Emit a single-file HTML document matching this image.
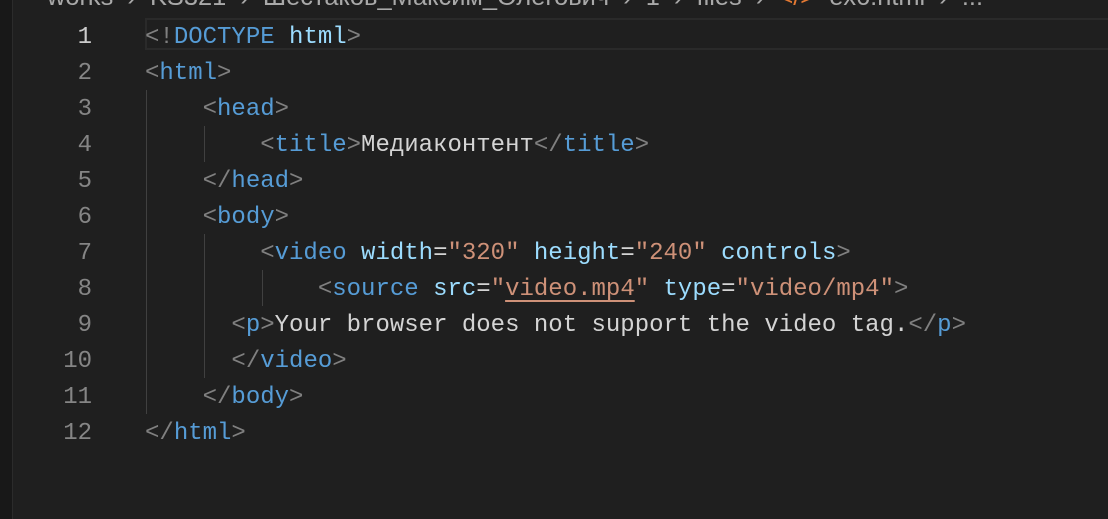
<!DOCTYPE html>
<html><head><style>
body{margin:0;width:1108px;height:519px;background:#1f1f1f;overflow:hidden;position:relative;font-family:"Liberation Mono",monospace;font-size:24px}
.strip{position:absolute;left:0;top:0;width:12px;height:519px;background:#181818;border-right:1px solid #2b2b2b}
.bc{position:absolute;left:47px;top:-17px;color:#a9a9a9;font-family:"Liberation Sans","DejaVu Sans",sans-serif;font-size:25.4px;white-space:pre}
.hl{position:absolute;left:145px;top:18px;width:980px;height:32px;border:2px solid #2a2a2a;box-sizing:border-box}
.ln{position:absolute;left:20px;width:72px;text-align:right;color:#858585;height:36px;line-height:36px}
.code{position:absolute;left:145px;height:36px;line-height:36px;white-space:pre;color:#d4d4d4}
.g{position:absolute;width:1px;background:#404040}
.p{color:#808080}.t{color:#569cd6}.a{color:#9cdcfe}.s{color:#ce9178}
u{text-decoration-color:#ce9178;text-underline-offset:5px}
</style></head><body>
<div class="strip"></div>
<div class="bc">works  ›  KS321  ›  Шестаков_Максим_Олегович  ›  1  ›  files  ›  <span style="color:#e37933">&lt;/&gt;</span>  ex6.html  ›  ...</div>
<div class="hl"></div>
<div class="g" style="left:146px;top:90px;height:324px"></div>
<div class="g" style="left:204px;top:126px;height:36px"></div>
<div class="g" style="left:204px;top:234px;height:144px"></div>
<div class="g" style="left:262px;top:270px;height:36px"></div>
<div style="position:absolute;left:0;top:2px;width:1108px">
<div class="ln" style="top:18px;color:#cccccc">1</div>
<div class="ln" style="top:54px">2</div>
<div class="ln" style="top:90px">3</div>
<div class="ln" style="top:126px">4</div>
<div class="ln" style="top:162px">5</div>
<div class="ln" style="top:198px">6</div>
<div class="ln" style="top:234px">7</div>
<div class="ln" style="top:270px">8</div>
<div class="ln" style="top:306px">9</div>
<div class="ln" style="top:342px">10</div>
<div class="ln" style="top:378px">11</div>
<div class="ln" style="top:414px">12</div>
<div class="code" style="top:18px"><span class="p">&lt;!</span><span class="t">DOCTYPE</span> <span class="a">html</span><span class="p">&gt;</span></div>
<div class="code" style="top:54px"><span class="p">&lt;</span><span class="t">html</span><span class="p">&gt;</span></div>
<div class="code" style="top:90px">    <span class="p">&lt;</span><span class="t">head</span><span class="p">&gt;</span></div>
<div class="code" style="top:126px">        <span class="p">&lt;</span><span class="t">title</span><span class="p">&gt;</span>Медиаконтент<span class="p">&lt;/</span><span class="t">title</span><span class="p">&gt;</span></div>
<div class="code" style="top:162px">    <span class="p">&lt;/</span><span class="t">head</span><span class="p">&gt;</span></div>
<div class="code" style="top:198px">    <span class="p">&lt;</span><span class="t">body</span><span class="p">&gt;</span></div>
<div class="code" style="top:234px">        <span class="p">&lt;</span><span class="t">video</span> <span class="a">width</span>=<span class="s">"320"</span> <span class="a">height</span>=<span class="s">"240"</span> <span class="a">controls</span><span class="p">&gt;</span></div>
<div class="code" style="top:270px">            <span class="p">&lt;</span><span class="t">source</span> <span class="a">src</span>=<span class="s">"<u>video.mp4</u>"</span> <span class="a">type</span>=<span class="s">"video/mp4"</span><span class="p">&gt;</span></div>
<div class="code" style="top:306px">      <span class="p">&lt;</span><span class="t">p</span><span class="p">&gt;</span>Your browser does not support the video tag.<span class="p">&lt;/</span><span class="t">p</span><span class="p">&gt;</span></div>
<div class="code" style="top:342px">      <span class="p">&lt;/</span><span class="t">video</span><span class="p">&gt;</span></div>
<div class="code" style="top:378px">    <span class="p">&lt;/</span><span class="t">body</span><span class="p">&gt;</span></div>
<div class="code" style="top:414px"><span class="p">&lt;/</span><span class="t">html</span><span class="p">&gt;</span></div>
</div>
</body></html>
